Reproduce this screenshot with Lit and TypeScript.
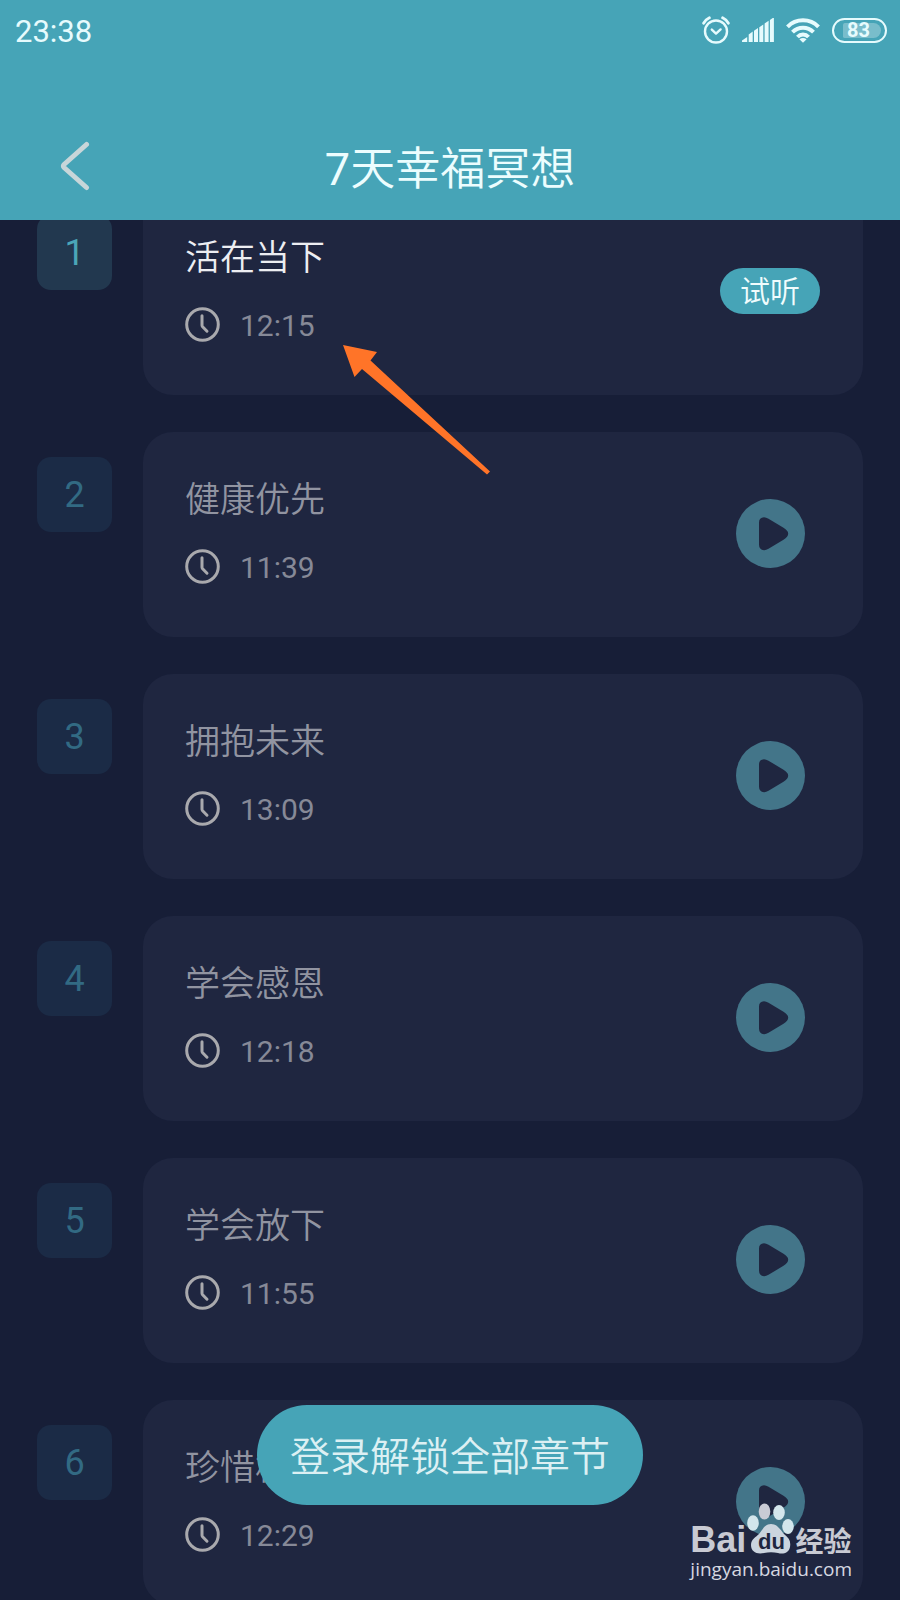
import { LitElement, html, svg, css } from "lit";
import { customElement, property } from "lit/decorators.js";
import { classMap } from "lit/directives/class-map.js";

interface Chapter {
  no: number;
  title: string;
  time: string;
  trial?: boolean;
}

const CHAPTERS: Chapter[] = [
  { no: 1, title: "活在当下", time: "12:15", trial: true },
  { no: 2, title: "健康优先", time: "11:39" },
  { no: 3, title: "拥抱未来", time: "13:09" },
  { no: 4, title: "学会感恩", time: "12:18" },
  { no: 5, title: "学会放下", time: "11:55" },
  { no: 6, title: "珍惜相遇", time: "12:29" },
];

@customElement("status-bar")
export class StatusBar extends LitElement {
  @property() time = "";
  @property({ type: Number }) battery = 0;

  static styles = css`
    :host {
      display: flex;
      align-items: center;
      justify-content: space-between;
      height: 60px;
      padding: 0 13px 0 15px;
      color: #e6fbfd;
    }
    .time {
      font-size: 31px;
      line-height: 60px;
      padding-top: 3px;
    }
    .icons {
      display: flex;
      align-items: center;
      gap: 12px;
    }
    svg {
      display: block;
    }
    .battery {
      box-sizing: border-box;
      width: 55px;
      height: 25px;
      padding: 3px 4px 3px 9px;
      border: 2px solid #e6fbfd;
      border-radius: 13px;
    }
    .level {
      height: 15px;
      border-radius: 2px 8px 8px 2px;
      background: rgba(255, 255, 255, 0.28);
      display: flex;
      align-items: center;
      padding-left: 4px;
      font-size: 20px;
      font-weight: 700;
    }
  `;

  render() {
    const bars = [1, 2, 3, 4, 5];
    return html`
      <span class="time">${this.time}</span>
      <div class="icons">
        <svg width="28" height="28" viewBox="0 0 28 28" fill="none" stroke="currentColor" stroke-width="2.4" stroke-linecap="round" stroke-linejoin="round">
          <circle cx="14" cy="15.5" r="11" />
          <path d="M9.8 13.6 14 17.6 18.6 13.4" />
          <path d="M1.6 7.2Q3.6 3.6 7.4 1.8M26.4 7.2Q24.4 3.6 20.6 1.8" stroke-width="2.8" />
        </svg>
        <svg width="32" height="24" viewBox="0 0 32 24" fill="currentColor">
          <path d="M0 24V22.5L5.2 19V24Z" />
          ${bars.map(
            (i) => svg`<path d=${`M${1.4 + i * 5.3} 24V${20 - i * 3.6}L${5.4 + i * 5.3} ${17.2 - i * 3.6}V24Z`} />`
          )}
        </svg>
        <svg width="34" height="25" viewBox="0 0 34 25" fill="none" stroke="currentColor" stroke-width="4">
          <path d="M1.5 8.8C10 0.2 24 0.2 32.5 8.8" />
          <path d="M6.5 14.2C12.5 8.2 21.5 8.2 27.5 14.2" />
          <path d="M11.5 19C14.5 15.8 19.5 15.8 22.5 19" />
          <path d="M17 24.8 13.4 21.2Q17 18.6 20.6 21.2Z" fill="currentColor" stroke="none" />
        </svg>
        <div class="battery"><div class="level">${this.battery}</div></div>
      </div>
    `;
  }
}

@customElement("chapter-row")
export class ChapterRow extends LitElement {
  @property({ attribute: false }) chapter!: Chapter;

  static styles = css`
    :host {
      display: flex;
      align-items: flex-start;
      gap: 31px;
    }
    .badge {
      flex: none;
      width: 75px;
      height: 75px;
      margin-top: 25px;
      border-radius: 14px;
      background: #1b2b46;
      color: #326a83;
      font-size: 36px;
      line-height: 76px;
      text-align: center;
    }
    .badge.open {
      background: #22384f;
      color: #4ba6b8;
    }
    .card {
      flex: 1;
      display: flex;
      align-items: center;
      justify-content: space-between;
      padding: 44px 43px 51px 42px;
      border-radius: 30px;
      background: #1f2640;
    }
    .title {
      margin: 0 0 20px;
      font-size: 35px;
      font-weight: 350;
      line-height: 50px;
      color: #9194a1;
    }
    .title.open {
      color: #edeef2;
    }
    .time {
      display: flex;
      align-items: center;
      gap: 20px;
      height: 40px;
      font-size: 30px;
      line-height: 36px;
      color: #868997;
    }
    .time span {
      padding-top: 4px;
    }
    .time svg {
      display: block;
      color: #a9a9ad;
    }
    .action {
      display: flex;
      justify-content: center;
      align-items: center;
      width: 100px;
      height: 0;
      margin-top: 4px;
    }
    button {
      flex: none;
      border: 0;
      padding: 0;
      font: inherit;
      cursor: pointer;
      background: none;
    }
    .trial {
      height: 46px;
      width: 100px;
      padding-top: 2px;
      border-radius: 23px;
      background: #46a4b7;
      color: #f0fcfd;
      font-size: 30px;
      font-weight: 350;
      line-height: 44px;
    }
    .play svg {
      display: block;
    }
  `;

  render() {
    const c = this.chapter;
    const open = { open: !!c.trial };
    return html`
      <div class=${classMap({ badge: true, ...open })}>${c.no}</div>
      <article class="card">
        <div>
          <h2 class=${classMap({ title: true, ...open })}>${c.title}</h2>
          <div class="time">
            <svg width="35" height="35" viewBox="0 0 35 35" fill="none" stroke="currentColor" stroke-width="3" stroke-linecap="round" stroke-linejoin="round">
              <circle cx="17.5" cy="17.5" r="15.8" />
              <path d="M17 8.8V18.2Q17 19 17.6 19.7L22 24.2" />
            </svg>
            <span>${c.time}</span>
          </div>
        </div>
        <div class="action">
          ${c.trial
            ? html`<button class="trial">试听</button>`
            : html`<button class="play" aria-label="播放">
                <svg width="69" height="69" viewBox="0 0 69 69">
                  <circle cx="34.5" cy="34.5" r="34.5" fill="#437589" />
                  <path d="M23 23.5Q23 18.5 28 18.2Q30 18.2 32.5 19.7L47.5 28.8Q52.2 31.6 52.2 34.7Q52.2 37.8 47.5 40.8L32.5 49.8Q30 51.3 28 51.2Q23 50.8 23 45.5Z" fill="#1f2640" />
                </svg>
              </button>`}
        </div>
      </article>
    `;
  }
}

@customElement("site-mark")
export class SiteMark extends LitElement {
  static styles = css`
    :host {
      display: block;
      color: #c8cad3;
    }
    .brand {
      display: flex;
      align-items: flex-end;
      height: 51px;
      font-weight: 700;
    }
    .latin {
      font-family: "Liberation Sans", sans-serif;
      font-size: 36px;
      line-height: 36px;
    }
    .cjk {
      font-family: "Noto Sans CJK SC", sans-serif;
      font-size: 28px;
      line-height: 36px;
    }
    svg {
      display: block;
      flex: none;
      margin-bottom: 4px;
    }
    .du {
      font: 700 22px "Liberation Sans", sans-serif;
    }
    .url {
      font-family: "Open Sans", sans-serif;
      font-size: 19px;
      font-weight: 500;
      line-height: 22px;
      color: #d6d8e0;
    }
  `;

  render() {
    return html`
      <div class="brand">
        <span class="latin">Bai</span>
        <svg width="49" height="51" viewBox="0 0 49 51">
          <g fill="#d3e6ec">
            <ellipse cx="7" cy="20" rx="5.8" ry="7.8" />
            <ellipse cx="18.5" cy="8.5" rx="5.8" ry="8" fill="#c9cbd5" />
            <ellipse cx="33" cy="9.5" rx="5.8" ry="7.5" />
            <ellipse cx="42" cy="23.5" rx="5.8" ry="7.5" />
            <path d="M25 21C31 21 34 26 38 31C43 35 45 38 44 44C43 50 37 51.5 32 50Q25 48.5 18 50C11 51.5 5 49 5 42C5 36 10 34 13 31C17 26 19 21 25 21Z" fill="#cbd4de" />
          </g>
          <text class="du" x="12" y="46" fill="#1f2640">du</text>
        </svg>
        <span class="cjk">经验</span>
      </div>
      <div class="url">jingyan.baidu.com</div>
    `;
  }
}

@customElement("app-root")
export class AppRoot extends LitElement {
  static styles = css`
    :host {
      position: relative;
      display: flex;
      flex-direction: column;
      height: 100vh;
      overflow: hidden;
      background: #171e37;
      font-family: Roboto, "Noto Sans CJK SC", sans-serif;
    }
    header {
      position: relative;
      z-index: 1;
      background: #46a4b7;
    }
    nav {
      display: grid;
      grid-template-columns: 1fr auto 1fr;
      align-items: center;
      height: 108px;
      padding: 52px 60px 0;
    }
    .back {
      justify-self: start;
      padding: 0;
      border: 0;
      background: none;
      cursor: pointer;
    }
    .back svg {
      display: block;
    }
    h1 {
      margin: 0;
      padding-top: 8px;
      font-size: 45px;
      font-weight: 350;
      line-height: 60px;
      color: #ecfdfe;
    }
    .days {
      font-weight: 400;
    }
    main {
      flex: 1;
      min-height: 0;
      overflow: hidden;
    }
    /* The list is shown scrolled a little under the header. */
    .list {
      display: flex;
      flex-direction: column;
      gap: 37px;
      margin: -30px 0 0;
      padding: 0 37px 37px;
      list-style: none;
    }
    .pointer {
      position: absolute;
      left: 340px;
      top: 342px;
    }
    .dock {
      position: absolute;
      left: 0;
      right: 0;
      bottom: 95px;
      display: flex;
      justify-content: center;
    }
    .unlock {
      padding: 6px 33px 0;
      border: 0;
      border-radius: 50px;
      background: #46a4b7;
      color: #dcf0f3;
      font: inherit;
      font-size: 40px;
      font-weight: 350;
      line-height: 94px;
      cursor: pointer;
    }
    .mark {
      position: absolute;
      right: 48px;
      bottom: 20px;
    }
  `;

  render() {
    return html`
      <header>
        <status-bar time="23:38" battery="83"></status-bar>
        <nav>
          <button class="back" aria-label="返回">
            <svg width="30" height="50" viewBox="0 0 30 50" fill="none" stroke="#c8d6d9" stroke-width="5" stroke-linecap="round" stroke-linejoin="round">
              <path d="M26.5 3.5 4 23.5Q2.8 25 4 26.5L26.5 46.5" />
            </svg>
          </button>
          <h1><span class="days">7</span>天幸福冥想</h1>
        </nav>
      </header>
      <main>
        <ul class="list">
          ${CHAPTERS.map((c) => html`<li><chapter-row .chapter=${c}></chapter-row></li>`)}
        </ul>
      </main>
      <svg class="pointer" width="152" height="136" viewBox="0 0 152 136" aria-hidden="true">
        <path d="M3 3 37 10 30.5 18.5 150 129.5 147 132.5 22 27 14.5 35Z" fill="#ff7428" />
      </svg>
      <div class="dock"><button class="unlock">登录解锁全部章节</button></div>
      <site-mark class="mark"></site-mark>
    `;
  }
}
